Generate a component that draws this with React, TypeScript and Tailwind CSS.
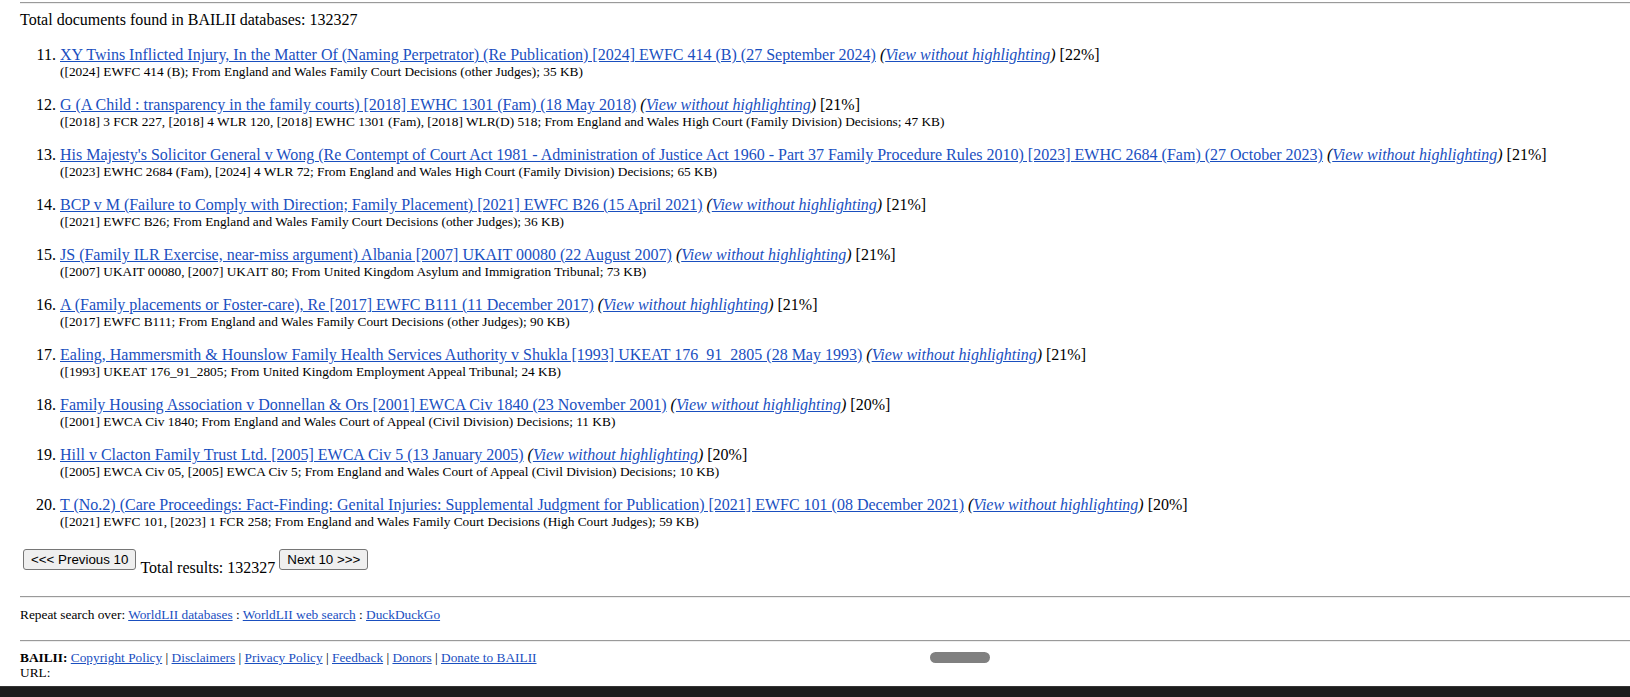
import React from 'react';

type Result = {
  title: string;
  score: string;
  info: string;
};

const results: Result[] = [
  {
    title: 'XY Twins Inflicted Injury, In the Matter Of (Naming Perpetrator) (Re Publication) [2024] EWFC 414 (B) (27 September 2024)',
    score: '[22%]',
    info: '([2024] EWFC 414 (B); From England and Wales Family Court Decisions (other Judges); 35 KB)',
  },
  {
    title: 'G (A Child : transparency in the family courts) [2018] EWHC 1301 (Fam) (18 May 2018)',
    score: '[21%]',
    info: '([2018] 3 FCR 227, [2018] 4 WLR 120, [2018] EWHC 1301 (Fam), [2018] WLR(D) 518; From England and Wales High Court (Family Division) Decisions; 47 KB)',
  },
  {
    title: "His Majesty's Solicitor General v Wong (Re Contempt of Court Act 1981 - Administration of Justice Act 1960 - Part 37 Family Procedure Rules 2010) [2023] EWHC 2684 (Fam) (27 October 2023)",
    score: '[21%]',
    info: '([2023] EWHC 2684 (Fam), [2024] 4 WLR 72; From England and Wales High Court (Family Division) Decisions; 65 KB)',
  },
  {
    title: 'BCP v M (Failure to Comply with Direction; Family Placement) [2021] EWFC B26 (15 April 2021)',
    score: '[21%]',
    info: '([2021] EWFC B26; From England and Wales Family Court Decisions (other Judges); 36 KB)',
  },
  {
    title: 'JS (Family ILR Exercise, near-miss argument) Albania [2007] UKAIT 00080 (22 August 2007)',
    score: '[21%]',
    info: '([2007] UKAIT 00080, [2007] UKAIT 80; From United Kingdom Asylum and Immigration Tribunal; 73 KB)',
  },
  {
    title: 'A (Family placements or Foster-care), Re [2017] EWFC B111 (11 December 2017)',
    score: '[21%]',
    info: '([2017] EWFC B111; From England and Wales Family Court Decisions (other Judges); 90 KB)',
  },
  {
    title: 'Ealing, Hammersmith & Hounslow Family Health Services Authority v Shukla [1993] UKEAT 176_91_2805 (28 May 1993)',
    score: '[21%]',
    info: '([1993] UKEAT 176_91_2805; From United Kingdom Employment Appeal Tribunal; 24 KB)',
  },
  {
    title: 'Family Housing Association v Donnellan & Ors [2001] EWCA Civ 1840 (23 November 2001)',
    score: '[20%]',
    info: '([2001] EWCA Civ 1840; From England and Wales Court of Appeal (Civil Division) Decisions; 11 KB)',
  },
  {
    title: 'Hill v Clacton Family Trust Ltd. [2005] EWCA Civ 5 (13 January 2005)',
    score: '[20%]',
    info: '([2005] EWCA Civ 05, [2005] EWCA Civ 5; From England and Wales Court of Appeal (Civil Division) Decisions; 10 KB)',
  },
  {
    title: 'T (No.2) (Care Proceedings: Fact-Finding: Genital Injuries: Supplemental Judgment for Publication) [2021] EWFC 101 (08 December 2021)',
    score: '[20%]',
    info: '([2021] EWFC 101, [2023] 1 FCR 258; From England and Wales Family Court Decisions (High Court Judges); 59 KB)',
  },
];

const linkCls = 'text-[#1a4fbf] underline';

function Rule() {
  return <div className="h-[2px] border-t border-[#9a9a9a] border-b border-b-[#eeeeee]" />;
}

function NavButton({ label }: { label: string }) {
  return (
    <button className="h-[21px] px-[7px] border border-[#767676] rounded-[3px] bg-[#efefef] text-black text-[13.33px] leading-[17px] font-['Liberation_Sans',Arial,sans-serif]">
      {label}
    </button>
  );
}

export default function App() {
  const footerLinks = ['Copyright Policy', 'Disclaimers', 'Privacy Policy', 'Feedback', 'Donors', 'Donate to BAILII'];

  return (
    <div className="min-h-screen bg-white text-black font-['Liberation_Serif','Times_New_Roman',serif] text-[16px]">
      <div className="pl-5 pt-[2px]">
        <Rule />
        <p className="mt-[7px] leading-[18px]">Total documents found in BAILII databases: 132327</p>

        <ol start={11} className="list-decimal pl-10 mt-[17px] leading-[18px]">
          {results.map((r) => (
            <li key={r.title} className="mb-[17px] leading-[18px]">
              <div className="leading-[18px] whitespace-nowrap">
                <a href="#" className={linkCls}>{r.title}</a>{' '}
                <i>
                  (<a href="#" className={linkCls}>View without highlighting</a>)
                </i>{' '}
                {r.score}
              </div>
              <div className="text-[13.33px] leading-[15px] whitespace-nowrap">{r.info}</div>
            </li>
          ))}
        </ol>

        <div className="flex items-start gap-[4px] mt-[20px] ml-[3px]">
          <NavButton label="<<< Previous 10" />
          <span className="mt-[10px] leading-[18px]">Total results: 132327</span>
          <NavButton label="Next 10 >>>" />
        </div>

        <div className="mt-[19px]">
          <Rule />
        </div>
        <p className="mt-[9px] text-[13.33px] leading-[15px]">
          Repeat search over: <a href="#" className={linkCls}>WorldLII databases</a> :{' '}
          <a href="#" className={linkCls}>WorldLII web search</a> :{' '}
          <a href="#" className={linkCls}>DuckDuckGo</a>
        </p>
        <div className="mt-[18px]">
          <Rule />
        </div>
        <div className="mt-[8px] text-[13.33px] leading-[15px]">
          <div>
            <b>BAILII:</b>{' '}
            {footerLinks.map((l, i) => (
              <React.Fragment key={l}>
                <a href="#" className={linkCls}>{l}</a>
                {i < footerLinks.length - 1 ? ' | ' : ''}
              </React.Fragment>
            ))}
          </div>
          <div>URL:</div>
        </div>
      </div>

      {/* scroll thumb overlay */}
      <div className="fixed left-[930px] top-[652px] w-[60px] h-[11px] rounded-full bg-[#808080]" />
      {/* dark strip at the bottom of the window */}
      <div className="fixed left-0 right-0 bottom-0 h-[11px] bg-[#1c1c1c] border-t border-[#333333]" />
    </div>
  );
}
